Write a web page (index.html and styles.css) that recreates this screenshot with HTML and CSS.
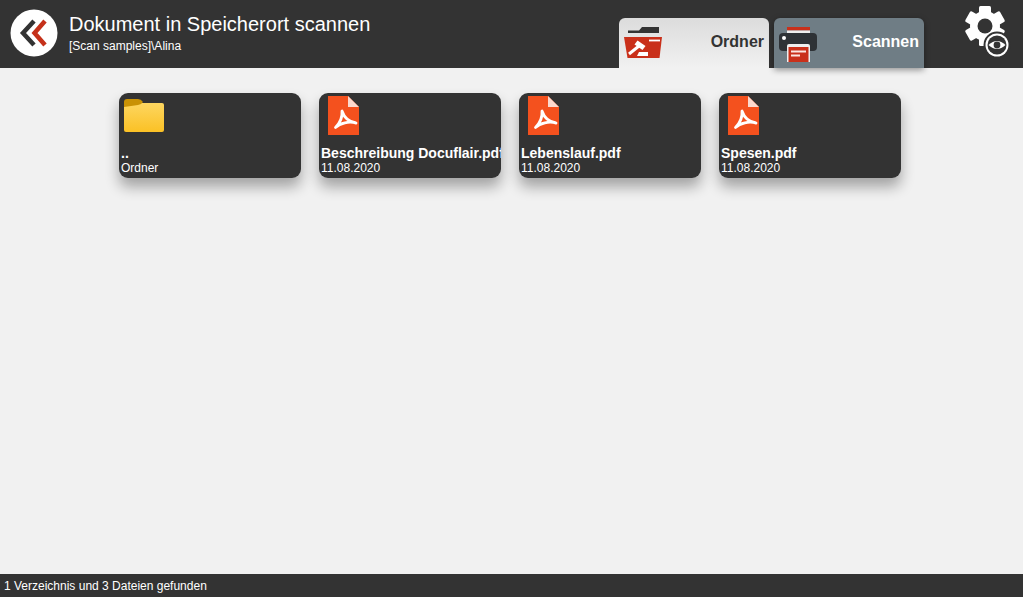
FILE: index.html
```html
<!DOCTYPE html>
<html lang="de">
<head>
    <meta charset="UTF-8">
    <meta name="viewport" content="width=device-width, initial-scale=1.0">
    <title>Dokument in Speicherort scannen</title>
    <link rel="stylesheet" href="styles.css">
</head>
<body>
<div class="page">
    <!-- Header -->
    <header class="header">
        <div class="back">
            <svg viewBox="0 0 48 48" width="48" height="48">
                <circle cx="24" cy="24" r="23.5" fill="#fff"/>
                <path d="M24 12 L13 24 L24 36" fill="none" stroke="#333" stroke-width="4.5"/>
                <path d="M35 12 L24.5 24 L35 36" fill="none" stroke="#c5311a" stroke-width="4.5"/>
            </svg>
        </div>
        <div class="title-block">
            <div class="title">Dokument in Speicherort scannen</div>
            <div class="subtitle">[Scan samples]\Alina</div>
        </div>

        <div class="tabs">
            <div class="tab tab-active">
                <svg class="tab-icon" viewBox="0 0 40 33" width="40" height="33">
                    <path d="M4 4.5 H15 L18 1 H35 V7 H4 Z" fill="#333"/>
                    <path d="M0 11 H38 L35.5 32 H3.5 Z" fill="#c9301a"/>
                    <path d="M25 14.5 H36" stroke="#fff" stroke-width="1.8"/>
                    <path d="M13.5 14.5 L21.5 20 L18.5 24 L10.5 18.5 Z" fill="#fff"/>
                    <path d="M15 20 L5 28" stroke="#fff" stroke-width="3"/>
                    <path d="M13 30 H24 V26 H15 Z" fill="#fff"/>
                </svg>
                <span class="tab-label">Ordner</span>
            </div>
            <div class="tab tab-scan">
                <svg class="tab-icon" viewBox="0 0 39 37" width="39" height="37">
                    <path d="M8 1 H31 V4.5 H8 Z" fill="#c9301a"/>
                    <path d="M8 4.5 H31 V7 H8 Z" fill="#eee"/>
                    <rect x="0" y="7" width="38" height="18" rx="4" fill="#2e3236"/>
                    <circle cx="5" cy="12" r="2" fill="#fff"/>
                    <path d="M8 36 V20 Q8 18 10 18 H29 Q31 18 31 20 V36 Z" fill="#eee"/>
                    <rect x="9.5" y="21" width="20" height="15" fill="#c9301a"/>
                    <path d="M12 25.5 H27 M12 29.5 H21" stroke="#fbe6e0" stroke-width="2"/>
                </svg>
                <span class="tab-label">Scannen</span>
            </div>
        </div>

        <div class="settings">
            <svg viewBox="0 0 49 56" width="49" height="56">
                <g fill="#fff" transform="translate(21 23)">
                    <circle r="15"/>
                    <rect x="-6" y="-20" width="12" height="40" rx="1.5"/>
                    <rect x="-6" y="-20" width="12" height="40" rx="1.5" transform="rotate(60)"/>
                    <rect x="-6" y="-20" width="12" height="40" rx="1.5" transform="rotate(120)"/>
                </g>
                <circle cx="21" cy="23" r="7.5" fill="#333"/>
                <circle cx="33" cy="42" r="13.5" fill="#333"/>
                <circle cx="33" cy="42" r="11.5" fill="#fff"/>
                <circle cx="33" cy="42" r="9.5" fill="#333"/>
                <path d="M24.5 42 Q33 34 41.5 42 Q33 50 24.5 42 Z" fill="#fff"/>
                <circle cx="33" cy="42" r="3.4" fill="#333"/>
            </svg>
        </div>
    </header>

    <!-- File list -->
    <main class="files">
        <div class="card">
            <svg class="card-icon icon-folder" viewBox="0 0 41 33" width="41" height="33">
                <defs>
                    <linearGradient id="folderFill" x1="0" y1="0" x2="0" y2="1">
                        <stop offset="0" stop-color="#fdd660"/>
                        <stop offset="1" stop-color="#fbc125"/>
                    </linearGradient>
                </defs>
                <path d="M1 6 Q1 4 3 4 H39 Q41 4 41 6 V31 Q41 33 39 33 H3 Q1 33 1 31 Z" fill="url(#folderFill)"/>
                <path d="M1 3 Q1 0 4 0 H15 Q18 0 20 3 Q18 6 15 6 L1 8 Z" fill="#c99205"/>
            </svg>
            <div class="card-text">
                <div class="card-name">..</div>
                <div class="card-info">Ordner</div>
            </div>
        </div>

        <div class="card">
            <svg class="card-icon icon-pdf" viewBox="0 0 31 39" width="31" height="39">
                <path d="M0 0 H20 L31 11 V39 H0 Z" fill="#f4511e"/>
                <path d="M20 0 L31 11 H20 Z" fill="#fbd9ce"/>
                <path d="M14 15 C14.5 21 12 27 7.5 31.5 C12 27 21 25 28 27 C21 26 16 21 14 15 Z" fill="none" stroke="#fff" stroke-width="2.8" stroke-linejoin="round"/>
            </svg>
            <div class="card-text">
                <div class="card-name">Beschreibung Docuflair.pdf</div>
                <div class="card-info">11.08.2020</div>
            </div>
        </div>

        <div class="card">
            <svg class="card-icon icon-pdf" viewBox="0 0 31 39" width="31" height="39">
                <path d="M0 0 H20 L31 11 V39 H0 Z" fill="#f4511e"/>
                <path d="M20 0 L31 11 H20 Z" fill="#fbd9ce"/>
                <path d="M14 15 C14.5 21 12 27 7.5 31.5 C12 27 21 25 28 27 C21 26 16 21 14 15 Z" fill="none" stroke="#fff" stroke-width="2.8" stroke-linejoin="round"/>
            </svg>
            <div class="card-text">
                <div class="card-name">Lebenslauf.pdf</div>
                <div class="card-info">11.08.2020</div>
            </div>
        </div>

        <div class="card">
            <svg class="card-icon icon-pdf" viewBox="0 0 31 39" width="31" height="39">
                <path d="M0 0 H20 L31 11 V39 H0 Z" fill="#f4511e"/>
                <path d="M20 0 L31 11 H20 Z" fill="#fbd9ce"/>
                <path d="M14 15 C14.5 21 12 27 7.5 31.5 C12 27 21 25 28 27 C21 26 16 21 14 15 Z" fill="none" stroke="#fff" stroke-width="2.8" stroke-linejoin="round"/>
            </svg>
            <div class="card-text">
                <div class="card-name">Spesen.pdf</div>
                <div class="card-info">11.08.2020</div>
            </div>
        </div>
    </main>

    <!-- Status bar -->
    <footer class="status">1 Verzeichnis und 3 Dateien gefunden</footer>
</div>
</body>
</html>
```

FILE: styles.css
```css
/* General Reset */
body {
    margin: 0;
    padding: 0;
    font-family: "Liberation Sans", Arial, sans-serif;
    background-color: #f1f1f1;
}

svg {
    display: block;
}

.page {
    display: flex;
    flex-direction: column;
    height: 100vh;
    overflow: hidden;
}

/* Header */
.header {
    display: flex;
    align-items: flex-start;
    height: 68px;
    flex-shrink: 0;
    background-color: #333;
    color: #fff;
}

.back {
    margin: 9px 0 0 10px;
}

.title-block {
    margin: 13px 0 0 11px;
}

.title {
    font-size: 20px;
    line-height: 23px;
}

.subtitle {
    font-size: 12px;
    line-height: 14px;
    margin-top: 3px;
}

/* Tabs */
.tabs {
    display: flex;
    gap: 5px;
    margin: 18px 0 0 auto;
}

.tab {
    display: flex;
    justify-content: space-between;
    width: 150px;
    height: 50px;
    box-sizing: border-box;
    padding: 8px 5px 0;
    border-radius: 6px 6px 0 0;
}

.tab-active {
    background: linear-gradient(#dcdcdc, #f1f1f1);
    color: #333;
}

.tab-scan {
    background-color: #6f7d85;
    box-shadow: 0 2px 6px rgba(0, 0, 0, 0.4);
    color: #fff;
}

.tab-label {
    font-size: 16px;
    font-weight: bold;
    line-height: 18px;
    margin-top: 7px;
}

.settings {
    margin: 3px 10px 0 40px;
}

/* File cards */
.files {
    flex: 1;
    display: flex;
    align-items: flex-start;
    gap: 18px;
    padding: 25px 0 0 119px;
}

.card {
    display: flex;
    flex-direction: column;
    justify-content: space-between;
    width: 182px;
    height: 85px;
    box-sizing: border-box;
    padding: 3px 0 3px 2px;
    overflow: hidden;
    background-color: #333;
    border-radius: 9px;
    box-shadow: 0 9px 14px rgba(0, 0, 0, 0.32);
    color: #fff;
}

.icon-folder {
    margin: 3px 0 0 2px;
}

.icon-pdf {
    margin-left: 7px;
}

.card-name {
    font-size: 14px;
    font-weight: bold;
    line-height: 16px;
    white-space: nowrap;
}

.card-info {
    font-size: 12px;
    line-height: 14px;
}

/* Status bar */
.status {
    height: 23px;
    flex-shrink: 0;
    padding-left: 4px;
    background-color: #333;
    color: #fff;
    font-size: 12px;
    line-height: 24px;
}
```
